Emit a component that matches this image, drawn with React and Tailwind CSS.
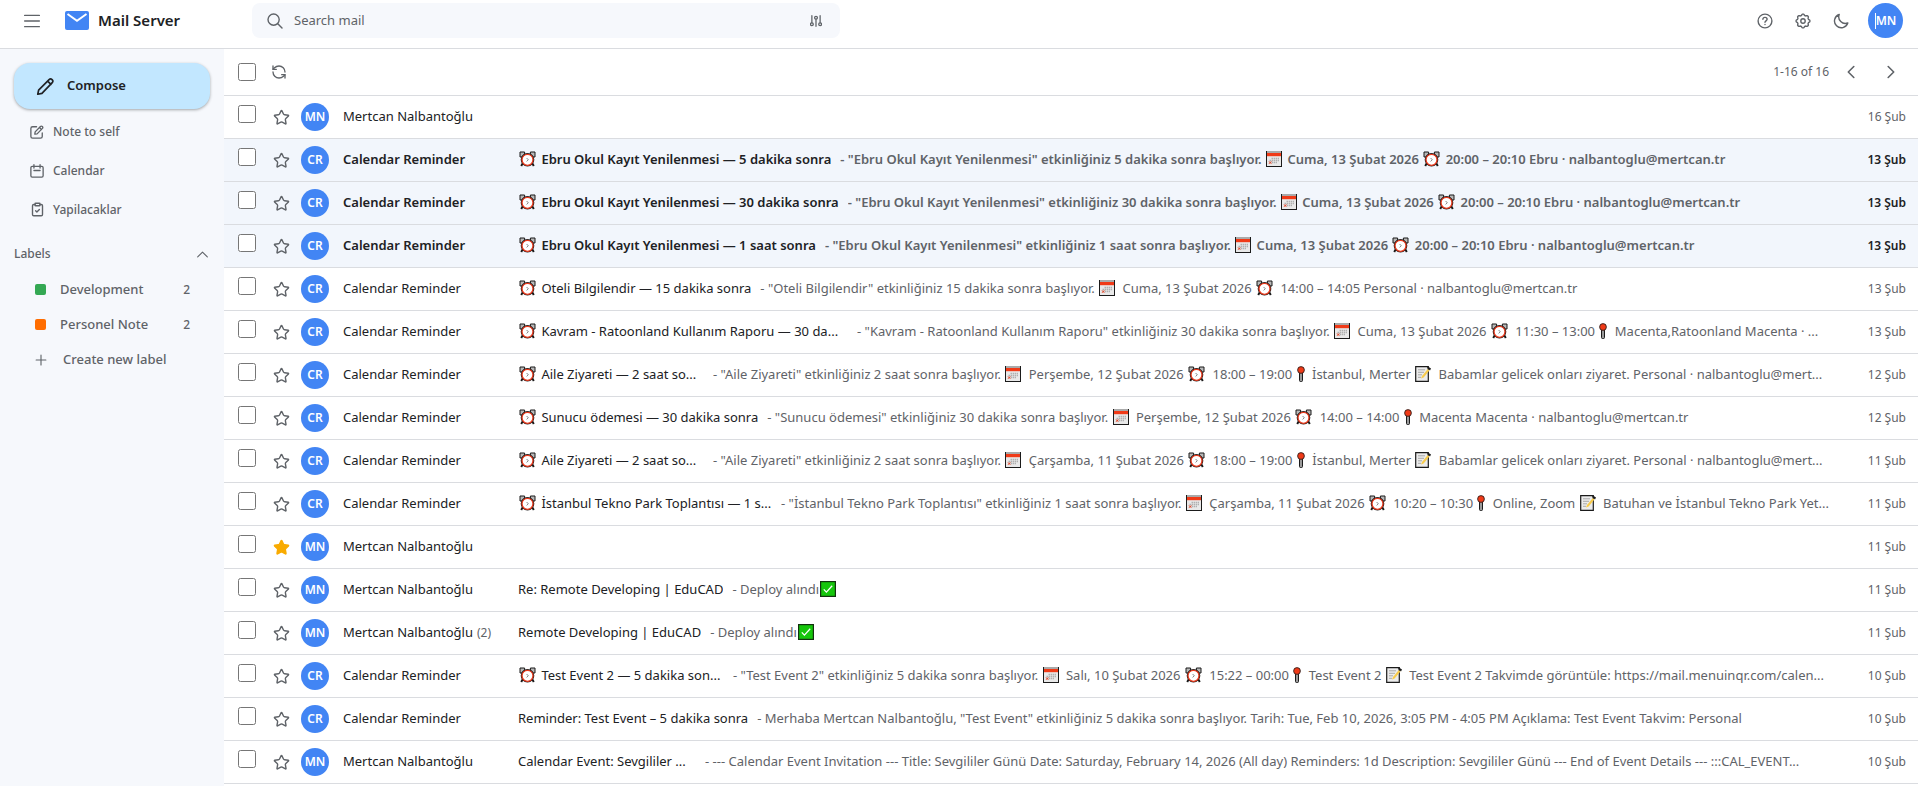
import React from "react";
import { ClipboardCheck, RefreshCcw, Star } from "lucide-react";

function Icon({ size = 16, stroke = 1.5, children, className = "" }) {
  return (
    <svg
      width={size}
      height={size}
      viewBox="0 0 16 16"
      fill="none"
      stroke="currentColor"
      strokeWidth={stroke}
      strokeLinecap="round"
      strokeLinejoin="round"
      aria-hidden="true"
      className={"shrink-0 " + className}
    >
      {children}
    </svg>
  );
}

const gearPath = (() => {
  const points = [];
  for (let i = 0; i < 96; i++) {
    const a = (i / 96) * Math.PI * 2;
    const r = 6.3 + 0.62 * Math.tanh(2 * Math.cos(8 * a));
    points.push((8 + r * Math.cos(a)).toFixed(2) + " " + (8 + r * Math.sin(a)).toFixed(2));
  }
  return "M" + points.join("L") + "Z";
})();

const emojiArt = {
  "⏰": {
    label: "Alarm clock",
    width: "w-[17px]",
    box: "0 0 17 16",
    art: (
      <>
        <path d="M1 1h4.6v2L2.8 6H1zM16 1h-4.6v2l2.8 3H16z" fill="#b9b9b9" stroke="#1b1b1b" strokeWidth="1" />
        <path d="M3.6 12.6 2.2 15M13.4 12.6l1.4 2.4" stroke="#1b1b1b" strokeWidth="2" />
        <circle cx="8.5" cy="8.8" r="6.8" fill="#1b1b1b" />
        <circle cx="8.5" cy="8.8" r="5.5" fill="#fff" stroke="#e8391c" strokeWidth="1.3" />
        <path d="m7.6 7 1.7 1.8-1.7 1.6" fill="none" stroke="#777" strokeWidth=".9" />
      </>
    ),
  },
  "📅": {
    label: "Calendar",
    width: "w-4",
    box: "0 0 16 16",
    art: (
      <>
        <rect x=".5" y=".5" width="15" height="15" fill="#e9e9e9" stroke="#1b1b1b" />
        <rect x="1" y="0" width="14" height="2" fill="#aaa" />
        <rect x="1" y="2" width="14" height="3.2" fill="#f03a17" />
        <path d="M5.5 7.5H13M3.5 9.5H13M3.5 11.5H11" stroke="#b0b0b0" strokeWidth="1.4" strokeDasharray="1.5 .6" />
        <path d="m3 10.4 2.4 2.4m0-2.4L3 12.8" stroke="#f03a17" strokeWidth=".9" />
      </>
    ),
  },
  "📍": {
    label: "Pin",
    width: "w-2",
    box: "0 0 8 16",
    art: (
      <>
        <rect x="2.5" y="6" width="3" height="9.5" rx="1" fill="#9a9a9a" stroke="#1b1b1b" />
        <circle cx="4" cy="4" r="3.4" fill="#f03a17" stroke="#1b1b1b" strokeWidth=".8" />
      </>
    ),
  },
  "📝": {
    label: "Memo",
    width: "w-4",
    box: "0 0 16 16",
    art: (
      <>
        <path d="M.7.7h12.6v14.6H.7z" fill="#ececec" stroke="#1b1b1b" strokeWidth="1.2" />
        <path d="M3 3.8h7M3 6.3h6M3 8.8h4M3 11.3h3" stroke="#aaa" />
        <path d="m6 12.5 1-2.6L12.8 3l1.6 1.4-5.8 7z" fill="#f8cc4d" />
        <path d="m11.8 1.8 3.2 2.6 1-1.8L13.4.8z" fill="#1b1b1b" />
      </>
    ),
  },
  "✅": {
    label: "Done",
    width: "w-4",
    box: "0 0 16 16",
    art: (
      <>
        <rect x=".6" y=".6" width="14.8" height="14.8" fill="#16c60c" stroke="#12330f" strokeWidth="1.2" />
        <path d="m3.8 8.4 2.6 2.7 5.8-6.3" fill="none" stroke="#fff" strokeWidth="1.3" />
      </>
    ),
  },
};

function Rich({ text, wide }) {
  return text.split(/(⏰|📅|📍|📝|✅)/u).map((part, i) => {
    const emoji = emojiArt[part];
    if (!emoji) return <React.Fragment key={i}>{part}</React.Fragment>;
    return (
      <svg
        key={i}
        viewBox={emoji.box}
        role="img"
        aria-label={emoji.label}
        className={"-mt-1 ml-px inline-block h-4 align-middle " + (wide ? "mr-1 " : "mr-0.5 ") + emoji.width}
      >
        {emoji.art}
      </svg>
    );
  });
}

const CR = "Calendar Reminder";
const MN = "Mertcan Nalbantoğlu";

const mails = [
  { from: MN, date: "16 Şub" },
  { from: CR, unread: true, date: "13 Şub", subject: "⏰ Ebru Okul Kayıt Yenilenmesi — 5 dakika sonra", text: '"Ebru Okul Kayıt Yenilenmesi" etkinliğiniz 5 dakika sonra başlıyor. 📅 Cuma, 13 Şubat 2026 ⏰ 20:00 – 20:10 Ebru · nalbantoglu@mertcan.tr' },
  { from: CR, unread: true, date: "13 Şub", subject: "⏰ Ebru Okul Kayıt Yenilenmesi — 30 dakika sonra", text: '"Ebru Okul Kayıt Yenilenmesi" etkinliğiniz 30 dakika sonra başlıyor. 📅 Cuma, 13 Şubat 2026 ⏰ 20:00 – 20:10 Ebru · nalbantoglu@mertcan.tr' },
  { from: CR, unread: true, date: "13 Şub", subject: "⏰ Ebru Okul Kayıt Yenilenmesi — 1 saat sonra", text: '"Ebru Okul Kayıt Yenilenmesi" etkinliğiniz 1 saat sonra başlıyor. 📅 Cuma, 13 Şubat 2026 ⏰ 20:00 – 20:10 Ebru · nalbantoglu@mertcan.tr' },
  { from: CR, date: "13 Şub", subject: "⏰ Oteli Bilgilendir — 15 dakika sonra", text: '"Oteli Bilgilendir" etkinliğiniz 15 dakika sonra başlıyor. 📅 Cuma, 13 Şubat 2026 ⏰ 14:00 – 14:05 Personal · nalbantoglu@mertcan.tr' },
  { from: CR, date: "13 Şub", size: "min-w-[330px]", subject: "⏰ Kavram - Ratoonland Kullanım Raporu — 30 da...", text: '"Kavram - Ratoonland Kullanım Raporu" etkinliğiniz 30 dakika sonra başlıyor. 📅 Cuma, 13 Şubat 2026 ⏰ 11:30 – 13:00 📍 Macenta,Ratoonland Macenta · ...' },
  { from: CR, date: "12 Şub", size: "min-w-[186px]", subject: "⏰ Aile Ziyareti — 2 saat so...", text: '"Aile Ziyareti" etkinliğiniz 2 saat sonra başlıyor. 📅 Perşembe, 12 Şubat 2026 ⏰ 18:00 – 19:00 📍 İstanbul, Merter 📝 Babamlar gelicek onları ziyaret. Personal · nalbantoglu@mert...' },
  { from: CR, date: "12 Şub", subject: "⏰ Sunucu ödemesi — 30 dakika sonra", text: '"Sunucu ödemesi" etkinliğiniz 30 dakika sonra başlıyor. 📅 Perşembe, 12 Şubat 2026 ⏰ 14:00 – 14:00 📍 Macenta Macenta · nalbantoglu@mertcan.tr' },
  { from: CR, date: "11 Şub", size: "min-w-[186px]", subject: "⏰ Aile Ziyareti — 2 saat so...", text: '"Aile Ziyareti" etkinliğiniz 2 saat sonra başlıyor. 📅 Çarşamba, 11 Şubat 2026 ⏰ 18:00 – 19:00 📍 İstanbul, Merter 📝 Babamlar gelicek onları ziyaret. Personal · nalbantoglu@mert...' },
  { from: CR, date: "11 Şub", size: "min-w-[254px]", subject: "⏰ İstanbul Tekno Park Toplantısı — 1 s...", text: '"İstanbul Tekno Park Toplantısı" etkinliğiniz 1 saat sonra başlıyor. 📅 Çarşamba, 11 Şubat 2026 ⏰ 10:20 – 10:30 📍 Online, Zoom 📝 Batuhan ve İstanbul Tekno Park Yet...' },
  { from: MN, starred: true, date: "11 Şub" },
  { from: MN, date: "11 Şub", subject: "Re: Remote Developing | EduCAD", text: "Deploy alındı✅" },
  { from: MN, count: 2, date: "11 Şub", subject: "Remote Developing | EduCAD", text: "Deploy alındı✅" },
  { from: CR, date: "10 Şub", size: "min-w-[206px]", subject: "⏰ Test Event 2 — 5 dakika son...", text: '"Test Event 2" etkinliğiniz 5 dakika sonra başlıyor. 📅 Salı, 10 Şubat 2026 ⏰ 15:22 – 00:00 📍 Test Event 2 📝 Test Event 2 Takvimde görüntüle: https://mail.menuinqr.com/calen...' },
  { from: CR, date: "10 Şub", subject: "Reminder: Test Event – 5 dakika sonra", text: 'Merhaba Mertcan Nalbantoğlu, "Test Event" etkinliğiniz 5 dakika sonra başlıyor. Tarih: Tue, Feb 10, 2026, 3:05 PM - 4:05 PM Açıklama: Test Event Takvim: Personal' },
  { from: MN, date: "10 Şub", size: "min-w-[178px]", subject: "Calendar Event: Sevgililer ...", text: "--- Calendar Event Invitation --- Title: Sevgililer Günü Date: Saturday, February 14, 2026 (All day) Reminders: 1d Description: Sevgililer Günü --- End of Event Details --- :::CAL_EVENT..." },
];

function MailRow({ mail }) {
  const initials = mail.from === CR ? "CR" : "MN";
  return (
    <li className={"flex h-[43px] items-center border-b border-[#dadce0] pr-3 pl-3.5 text-[13px] " + (mail.unread ? "bg-[#f2f6fc] font-semibold" : "bg-white")}>
      <input type="checkbox" aria-label={"Select mail from " + mail.from} className="mb-1.5 size-[18px] shrink-0" />
      <button type="button" aria-label="Star" className="ml-[9px] flex w-8 shrink-0 justify-center">
        <Star size={17} strokeWidth={2} className={mail.starred ? "fill-[#f9ab00] text-[#f9ab00]" : "text-[#5f6368]"} />
      </button>
      <span className="ml-1 flex size-7 shrink-0 items-center justify-center rounded-full bg-[#4285f4] text-xs font-semibold text-white">{initials}</span>
      <span className="ml-3.5 w-[175px] shrink-0 truncate text-[#202124]">
        {mail.from}
        {mail.count && <span className="ml-1 text-xs text-[#5f6368]">({mail.count})</span>}
      </span>
      <a href="#mail" className="flex min-w-0 flex-1 items-center">
        {mail.subject && (
          <>
            <span className={"shrink-0 truncate text-[#202124] " + (mail.size || "")}>
              <Rich text={mail.subject} />
            </span>
            <span className="ml-[9px] min-w-0 flex-1 truncate text-[#5f6368]">
              - <Rich text={mail.text} wide={!mail.unread} />
            </span>
          </>
        )}
      </a>
      <time className={"w-[76px] shrink-0 text-right text-xs " + (mail.unread ? "text-[#202124]" : "text-[#5f6368]")}>{mail.date}</time>
    </li>
  );
}

function Header() {
  return (
    <header className="flex h-[49px] items-start border-b border-[#dadce0] bg-white pt-[3px] pr-[15px] pl-[23px]">
      <div className="flex h-[35px] w-[229px] shrink-0 items-center">
        <button type="button" aria-label="Main menu">
          <Icon size={18} stroke={1.3}><path d="M1.5 3h13M1.5 8h13M1.5 13h13" /></Icon>
        </button>
        <svg width="24" height="19" viewBox="0 0 24 19" aria-hidden="true" className="ml-6">
          <rect width="24" height="19" rx="2" fill="#4285f4" />
          <path d="M2.5 3 12 9.8 21.5 3" fill="none" stroke="#fff" strokeWidth="2" />
        </svg>
        <h1 className="ml-[9px] text-[15px] font-semibold text-[#202124]">Mail Server</h1>
      </div>
      <div className="flex h-[35px] w-[588px] items-center rounded-lg bg-[#f6f8fc] pr-[18px] pl-[15px]">
        <Icon size={16} stroke={1.4}><circle cx="6.6" cy="6.6" r="5.6" /><path d="m10.8 10.8 4.2 4.2" /></Icon>
        <input type="search" aria-label="Search mail" placeholder="Search mail" className="ml-[11px] min-w-0 flex-1 bg-transparent text-[13px] outline-none placeholder:text-[#5f6368]" />
        <button type="button" aria-label="Search options">
          <Icon size={12} stroke={1.7}>
            <path d="M2.5 1v9M8 6v9M13.5 1v9" />
            <circle cx="2.5" cy="12.4" r="1.9" /><circle cx="8" cy="3.6" r="1.9" /><circle cx="13.5" cy="12.4" r="1.9" />
          </Icon>
        </button>
      </div>
      <div className="ml-auto flex h-[35px] items-center gap-[22px]">
        <button type="button" aria-label="Help">
          <Icon stroke={1.4}><circle cx="8" cy="8" r="6.9" /><path d="M5.9 6.3c.1-2.6 4.2-2.5 4.2 0 0 1.5-2.1 1.6-2.1 3M8 11.4v.2" /></Icon>
        </button>
        <button type="button" aria-label="Settings">
          <Icon stroke={1.4}><path d={gearPath} /><circle cx="8" cy="8" r="2.2" /></Icon>
        </button>
        <button type="button" aria-label="Dark mode">
          <Icon stroke={1.4}><path d="M6.2 1.5A6.8 6.8 0 1 0 14.8 10 6.6 6.6 0 0 1 6.2 1.5Z" /></Icon>
        </button>
        <button type="button" aria-label="Account" className="-ml-[3px] flex size-[35px] items-center justify-center rounded-full bg-[#4285f4] text-xs font-semibold text-white">
          <span className="border-l border-white">MN</span>
        </button>
      </div>
    </header>
  );
}

function Sidebar() {
  const link = "flex h-[39px] items-center gap-[9px] pl-4 text-xs font-medium";
  const label = "flex h-[35px] items-center pl-[21px] text-[13px] font-medium";
  return (
    <aside className="w-56 shrink-0 bg-[#f6f8fc] px-3.5 pt-3.5 text-[#5f6368]">
      <button type="button" className="flex h-[46px] w-full items-center gap-3 rounded-2xl bg-[#c2e7ff] pl-[22px] text-[13px] font-semibold text-[#202124] shadow-[0_1px_3px_rgba(60,64,67,0.45)]">
        <Icon size={19} stroke={1.4}><path d="m1.5 14.5.7-3.5L11 2.2c1.7-1.6 4.2.8 2.7 2.6L5 13.8zM9.8 3.4l2.8 2.8" /></Icon>
        Compose
      </button>
      <nav className="mt-[3px] flex flex-col">
        <a href="#note" className={link}>
          <Icon size={14} stroke={1.5}>
            <path d="M7.5 2H3a2 2 0 0 0-2 2v9a2 2 0 0 0 2 2h9a2 2 0 0 0 2-2V9" />
            <path d="m5.5 10.5.4-2.6 6-6.2c1.5-1.3 3.6.7 2.3 2.2l-6.1 6.2zM10.8 2.9l2.3 2.2" />
          </Icon>
          Note to self
        </a>
        <a href="#calendar" className={link}>
          <Icon size={14} stroke={1.5}><rect x="1" y="2.8" width="14" height="12.2" rx="1.5" /><path d="M4.5.8v3.8M11.5.8v3.8M4.5 7.4h7" /></Icon>
          Calendar
        </a>
        <a href="#todo" className={link}>
          <ClipboardCheck size={15} strokeWidth={2.2} className="-mr-px shrink-0" />
          Yapilacaklar
        </a>
      </nav>
      <section className="mt-[11px]">
        <button type="button" className="flex h-7 w-full items-center justify-between pr-0.5 text-xs font-medium">
          Labels
          <Icon size={11} stroke={1.6}><path d="m1 11.5 7-7 7 7" /></Icon>
        </button>
        <div className="mt-1 flex flex-col">
          <a href="#development" className={label}>
            <span className="mr-3.5 size-[11px] rounded-xs bg-[#34a853]" />
            Development
            <span className="mr-5 ml-auto text-xs">2</span>
          </a>
          <a href="#personel-note" className={label}>
            <span className="mr-3.5 size-[11px] rounded-xs bg-[#ff6d01]" />
            Personel Note
            <span className="mr-5 ml-auto text-xs">2</span>
          </a>
          <button type="button" className={label}>
            <Icon size={12} stroke={1.5} className="mr-4"><path d="M8 1.5v13M1.5 8h13" /></Icon>
            Create new label
          </button>
        </div>
      </section>
    </aside>
  );
}

export default function App() {
  return (
    <div className="flex min-h-screen flex-col bg-white font-['Noto_Sans','Open_Sans',sans-serif] text-[#5f6368]">
      <Header />
      <div className="flex flex-1">
        <Sidebar />
        <main className="min-w-0 flex-1 bg-white">
          <div className="flex h-[47px] items-center border-b border-[#dadce0] pr-[19px] pl-3.5">
            <input type="checkbox" aria-label="Select all" className="size-[18px]" />
            <button type="button" aria-label="Refresh" className="ml-[15px]"><RefreshCcw size={16} strokeWidth={2} /></button>
            <span className="mr-[14px] ml-auto text-xs">1-16 of 16</span>
            <button type="button" aria-label="Previous page" className="mr-6"><Icon stroke={1.6}><path d="m10.8 2.5-5.5 5.5 5.5 5.5" /></Icon></button>
            <button type="button" aria-label="Next page"><Icon stroke={1.6}><path d="m5.2 2.5 5.5 5.5-5.5 5.5" /></Icon></button>
          </div>
          <ul>
            {mails.map((mail, i) => <MailRow key={i} mail={mail} />)}
          </ul>
        </main>
      </div>
    </div>
  );
}
